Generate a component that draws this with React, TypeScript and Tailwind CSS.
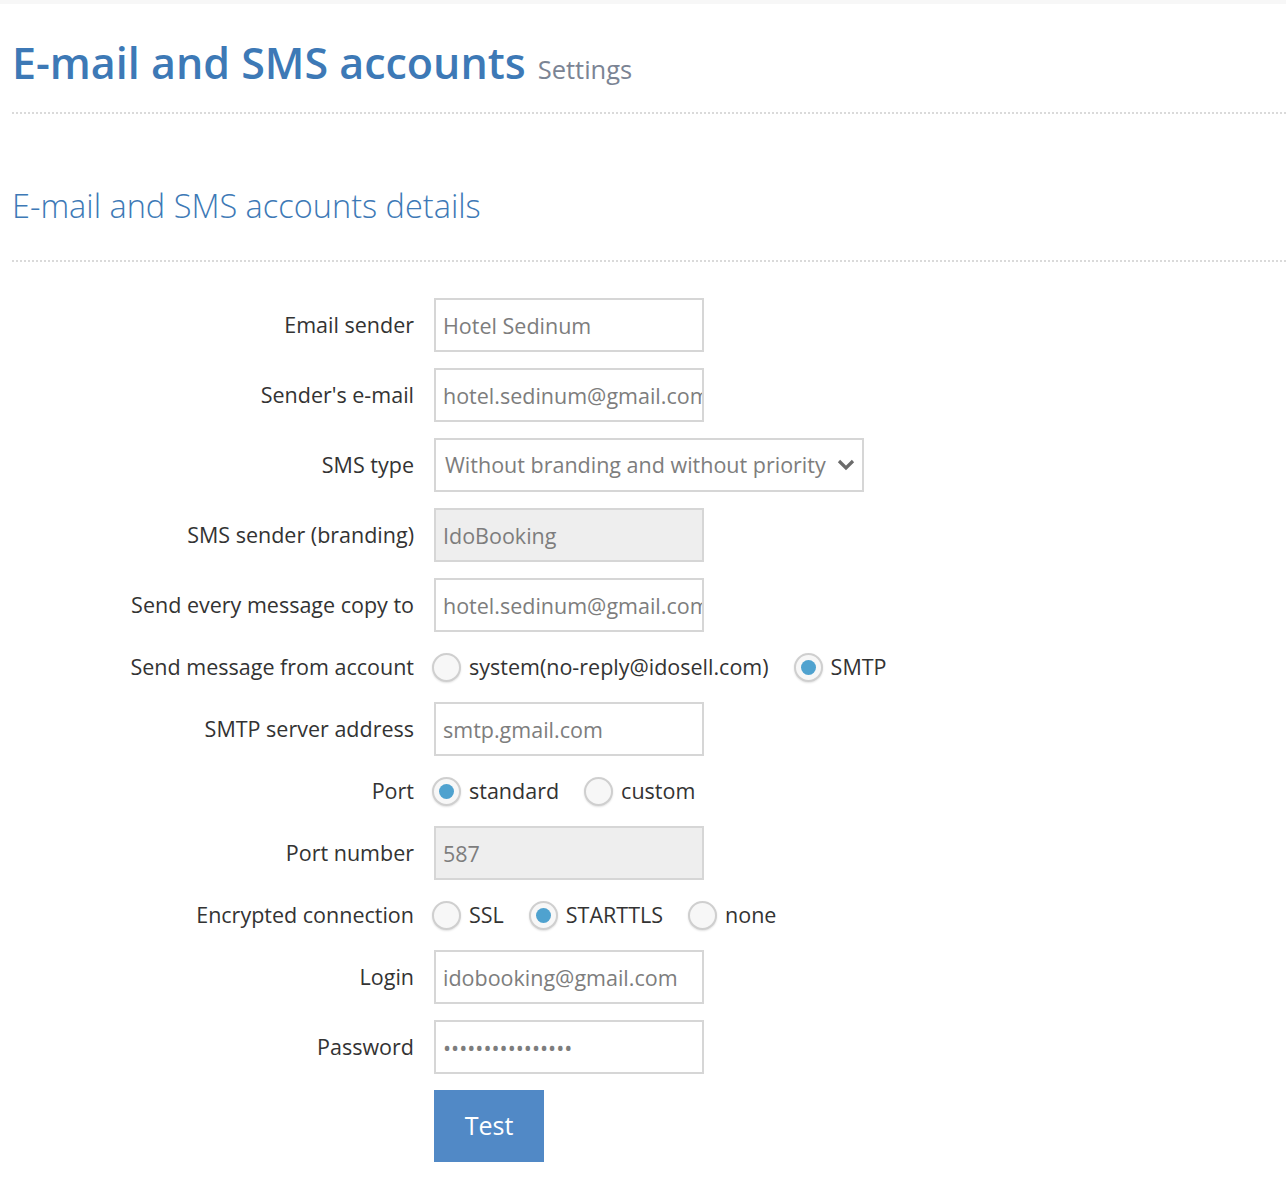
const font = { fontFamily: '"Open Sans", "Noto Sans", sans-serif' };

const Radio = ({ label, checked }: { label: string; checked?: boolean }) => (
  <label className="flex items-center mr-[25px]">
    <span className="w-[29px] h-[29px] rounded-full border-2 border-[#cfcfcf] bg-[#f7f7f7] shadow-[0_1px_2px_rgba(0,0,0,0.12)] flex items-center justify-center">
      {checked && <span className="w-[15px] h-[15px] rounded-full bg-[#4fa2cf]" />}
    </span>
    <span className="ml-2 text-[21.5px] text-[#333]">{label}</span>
  </label>
);

const Field = ({ value, disabled, type = 'text' }: { value: string; disabled?: boolean; type?: string }) => (
  <input
    type={type}
    readOnly
    value={value}
    className={`h-[54px] w-[270px] border-2 border-[#d6d6d6] ${disabled ? 'bg-[#eeeeee]' : 'bg-white'} pl-[7px] text-[21.5px] text-[#7d7d7d] outline-none`}
    style={font}
  />
);

const Row = ({ label, children, radio }: { label: string; children: React.ReactNode; radio?: boolean }) => (
  <div className={`flex items-center ${radio ? 'h-[38px]' : 'min-h-[54px]'}`}>
    <div className="w-[434px] pr-5 text-right text-[21.5px] text-[#333] shrink-0 whitespace-nowrap">{label}</div>
    <div className="flex items-center">{children}</div>
  </div>
);

export default function App() {
  return (
    <div className="min-h-[1188px] bg-white" style={font}>
      <div className="h-1 bg-[#f7f7f7]" />
      <div className="pl-3">
        <div className="flex items-baseline gap-3 pt-[35px] pb-[24px] border-b-2 border-dotted border-[#dadada]">
          <h1 className="text-[43px] leading-[1.1] font-semibold text-[#3d79b6]">E-mail and SMS accounts</h1>
          <span className="text-[25.5px] text-[#7b8494]">Settings</span>
        </div>
        <div className="pt-[74px] pb-[36px] border-b-2 border-dotted border-[#dadada]">
          <h2 className="text-[32.5px] leading-[1.1] font-light text-[#3d79b6]">E-mail and SMS accounts details</h2>
        </div>
      </div>
      <div className="flex flex-col gap-4 pt-[36px] pb-6">
        <Row label="Email sender">
          <Field value="Hotel Sedinum" />
        </Row>
        <Row label="Sender's e-mail">
          <Field value="hotel.sedinum@gmail.com" />
        </Row>
        <Row label="SMS type">
          <div className="h-[54px] w-[430px] border-2 border-[#d6d6d6] bg-white flex items-center justify-between pl-[9px] pr-[7px] text-[21.5px] text-[#7d7d7d] whitespace-nowrap">
            <span>Without branding and without priority</span>
            <svg width="18" height="12" viewBox="0 0 18 12">
              <polyline points="2,2 9,9 16,2" fill="none" stroke="#6b6b6b" strokeWidth="3.2" />
            </svg>
          </div>
        </Row>
        <Row label="SMS sender (branding)">
          <Field value="IdoBooking" disabled />
        </Row>
        <Row label="Send every message copy to">
          <Field value="hotel.sedinum@gmail.com" />
        </Row>
        <Row label="Send message from account" radio>
          <div className="flex items-center -ml-[2px]">
            <Radio label="system(no-reply@idosell.com)" />
            <Radio label="SMTP" checked />
          </div>
        </Row>
        <Row label="SMTP server address">
          <Field value="smtp.gmail.com" />
        </Row>
        <Row label="Port" radio>
          <div className="flex items-center -ml-[2px]">
            <Radio label="standard" checked />
            <Radio label="custom" />
          </div>
        </Row>
        <Row label="Port number">
          <Field value="587" disabled />
        </Row>
        <Row label="Encrypted connection" radio>
          <div className="flex items-center -ml-[2px]">
            <Radio label="SSL" />
            <Radio label="STARTTLS" checked />
            <Radio label="none" />
          </div>
        </Row>
        <Row label="Login">
          <Field value="idobooking@gmail.com" />
        </Row>
        <Row label="Password">
          <Field value="passwordpassword" type="password" />
        </Row>
        <div className="flex">
          <div className="w-[434px] shrink-0" />
          <button className="w-[110px] h-[72px] bg-[#5189c6] text-white text-[25px]">Test</button>
        </div>
      </div>
    </div>
  );
}
